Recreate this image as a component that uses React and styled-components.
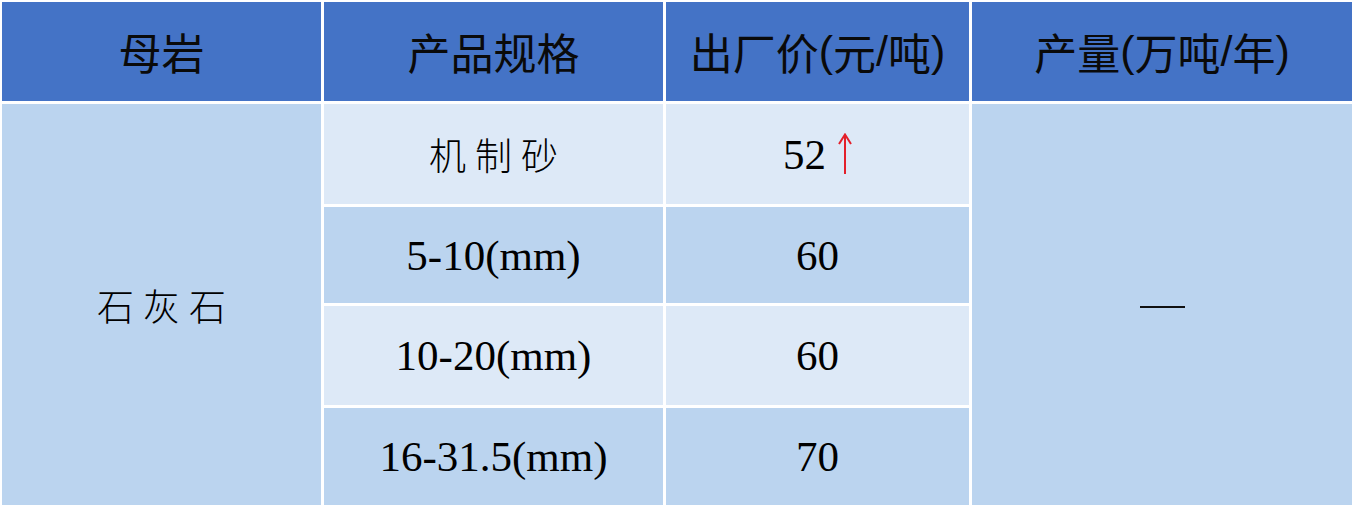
import React from "react";
import styled, { createGlobalStyle } from "styled-components";

const Global = createGlobalStyle`
  html, body { margin: 0; padding: 0; background: #ffffff; }
  body { font-family: "Noto Sans CJK SC", "Noto Sans", sans-serif; }
`;

const Table = styled.div`
  display: grid;
  grid-template-columns: 319px 339px 303px 380px;
  grid-template-rows: 99px 100px 96px 99px 97px;
  gap: 3px;
  padding: 2px;
  width: max-content;
  background: #ffffff;
`;

const HeadCell = styled.div`
  background: #4473c6;
  color: #0a0a0a;
  display: flex;
  align-items: center;
  justify-content: center;
  font-family: "Noto Sans CJK SC", sans-serif;
  font-size: 43px;
  line-height: 1;
  white-space: nowrap;
`;

const Paren = styled.span`
  font-family: "Liberation Sans", sans-serif;
  font-size: 43px;
`;

const Cell = styled.div`
  background: ${(p) => (p.$light ? "#dde9f7" : "#bbd4ef")};
  display: flex;
  align-items: center;
  justify-content: center;
  color: #000;
  grid-row: ${(p) => p.$rows || "auto"};
  white-space: nowrap;
`;

const CjkText = styled.span`
  font-family: "Noto Sans CJK SC", sans-serif;
  font-weight: 300;
  font-size: 37px;
  letter-spacing: 9px;
  margin-right: -9px;
`;

const NumText = styled.span`
  font-family: "Liberation Serif", "Times New Roman", serif;
  font-size: 43px;
  display: inline-flex;
  align-items: center;
  gap: 12px;
`;

const Dash = styled.span`
  display: block;
  width: 45px;
  height: 2px;
  background: #111;
  margin-top: 4px;
`;

const UpArrow = () => (
  <svg width="14" height="42" viewBox="0 0 14 42" aria-hidden="true">
    <line x1="7" y1="2" x2="7" y2="41" stroke="#e3202b" strokeWidth="2" />
    <path d="M1 11 L7 1.5 L13 11" fill="none" stroke="#e3202b" strokeWidth="2" />
  </svg>
);

const rows = [
  { spec: "机制砂", cjk: true, price: "52", up: true },
  { spec: "5-10(mm)", price: "60" },
  { spec: "10-20(mm)", price: "60" },
  { spec: "16-31.5(mm)", price: "70" },
];

export default function App() {
  return (
    <>
      <Global />
      <Table>
        <HeadCell>母岩</HeadCell>
        <HeadCell>产品规格</HeadCell>
        <HeadCell>
          出厂价<Paren>(</Paren>元<Paren>/</Paren>吨<Paren>)</Paren>
        </HeadCell>
        <HeadCell>
          产量<Paren>(</Paren>万吨<Paren>/</Paren>年<Paren>)</Paren>
        </HeadCell>

        <Cell $rows="2 / span 4" style={{ gridColumn: 1 }}>
          <CjkText>石灰石</CjkText>
        </Cell>
        {rows.map((r, i) => (
          <React.Fragment key={r.spec}>
            <Cell $light={i % 2 === 0} style={{ gridColumn: 2, gridRow: i + 2 }}>
              {r.cjk ? <CjkText>{r.spec}</CjkText> : <NumText>{r.spec}</NumText>}
            </Cell>
            <Cell $light={i % 2 === 0} style={{ gridColumn: 3, gridRow: i + 2 }}>
              <NumText>
                {r.price}
                {r.up && <UpArrow />}
              </NumText>
            </Cell>
          </React.Fragment>
        ))}
        <Cell $rows="2 / span 4" style={{ gridColumn: 4 }}>
          <Dash />
        </Cell>
      </Table>
    </>
  );
}
